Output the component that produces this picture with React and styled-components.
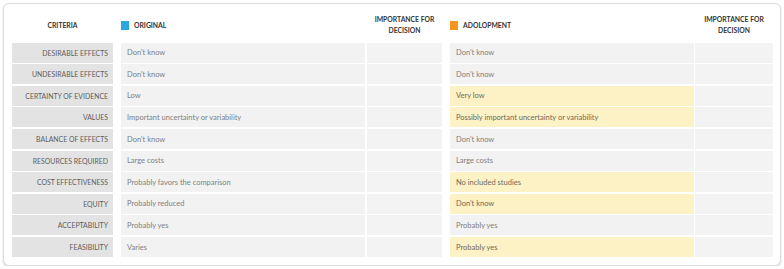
import styled, { createGlobalStyle } from 'styled-components'

const GlobalStyle = createGlobalStyle`
  body {
    margin: 0;
    background: #ffffff;
    font-family: Lato, "Liberation Sans", Arial, sans-serif;
  }
`;

const Card = styled.div`
  box-sizing: border-box;
  margin: 3px 0 0 3px;
  width: 778px;
  height: 263px;
  border: 1px solid #dcdcdc;
  border-radius: 6px;
  box-shadow: 0 1px 2px rgba(0, 0, 0, 0.18);
  padding: 4px 6px 0 8px;
  background: #fff;
`;

const Row = styled.div`
  display: flex;
  height: ${({ $head }) => ($head ? '34px' : '20px')};
  margin-bottom: ${({ $head }) => ($head ? '0.7px' : '1.6px')};
`;

const HeadCell = styled.div`
  display: flex;
  align-items: center;
  justify-content: ${({ $left }) => ($left ? 'flex-start' : 'center')};
  gap: 5px;
  width: ${({ $w }) => $w}px;
  margin-left: ${({ $ml }) => $ml || 0}px;
  color: #333;
  font-size: 6.8px;
  font-weight: 700;
  text-align: center;
  line-height: 11px;
  text-transform: uppercase;
`;

const Swatch = styled.span`
  display: inline-block;
  width: 8px;
  height: 9px;
  background: ${({ $color }) => $color};
`;

const Label = styled.div`
  box-sizing: border-box;
  width: 101px;
  display: flex;
  align-items: center;
  justify-content: flex-end;
  padding-right: 5px;
  background: #e3e3e3;
  color: #5e5e5e;
  font-size: 6.9px;
  text-transform: uppercase;
`;

const Value = styled.div`
  box-sizing: border-box;
  width: 244px;
  margin-left: ${({ $ml }) => $ml}px;
  display: flex;
  align-items: center;
  padding-left: 6px;
  background: ${({ $hl }) => ($hl ? '#fdf1c6' : '#f2f2f2')};
  color: ${({ $hl }) => ($hl ? '#6f6a58' : '#808080')};
  font-size: 7.5px;
`;

const Importance = styled.div`
  width: ${({ $w }) => $w}px;
  margin-left: ${({ $ml }) => $ml}px;
  background: #f3f3f3;
`;

const rows = [
  ['Desirable effects', "Don't know", "Don't know", false],
  ['Undesirable effects', "Don't know", "Don't know", false],
  ['Certainty of evidence', 'Low', 'Very low', true],
  ['Values', 'Important uncertainty or variability', 'Possibly important uncertainty or variability', true],
  ['Balance of effects', "Don't know", "Don't know", false],
  ['Resources required', 'Large costs', 'Large costs', false],
  ['Cost effectiveness', 'Probably favors the comparison', 'No included studies', true],
  ['Equity', 'Probably reduced', "Don't know", true],
  ['Acceptability', 'Probably yes', 'Probably yes', false],
  ['Feasibility', 'Varies', 'Probably yes', true],
]

const App = () => {
  return (
    <>
      <GlobalStyle />
      <Card>
        <Row $head>
          <HeadCell $w={101}>Criteria</HeadCell>
          <HeadCell $w={244} $ml={8} $left>
            <Swatch $color="#29a8e0" />
            Original
          </HeadCell>
          <HeadCell $w={75} $ml={2}>Importance for<br />decision</HeadCell>
          <HeadCell $w={244} $ml={8} $left>
            <Swatch $color="#f7941d" />
            Adolopment
          </HeadCell>
          <HeadCell $w={78} $ml={1}>Importance for<br />decision</HeadCell>
        </Row>
        {rows.map(([label, original, adolopment, changed]) => (
          <Row key={label}>
            <Label>{label}</Label>
            <Value $ml={8}>{original}</Value>
            <Importance $w={75} $ml={2} />
            <Value $ml={8} $hl={changed}>{adolopment}</Value>
            <Importance $w={78} $ml={1} />
          </Row>
        ))}
      </Card>
    </>
  )
}

export default App
